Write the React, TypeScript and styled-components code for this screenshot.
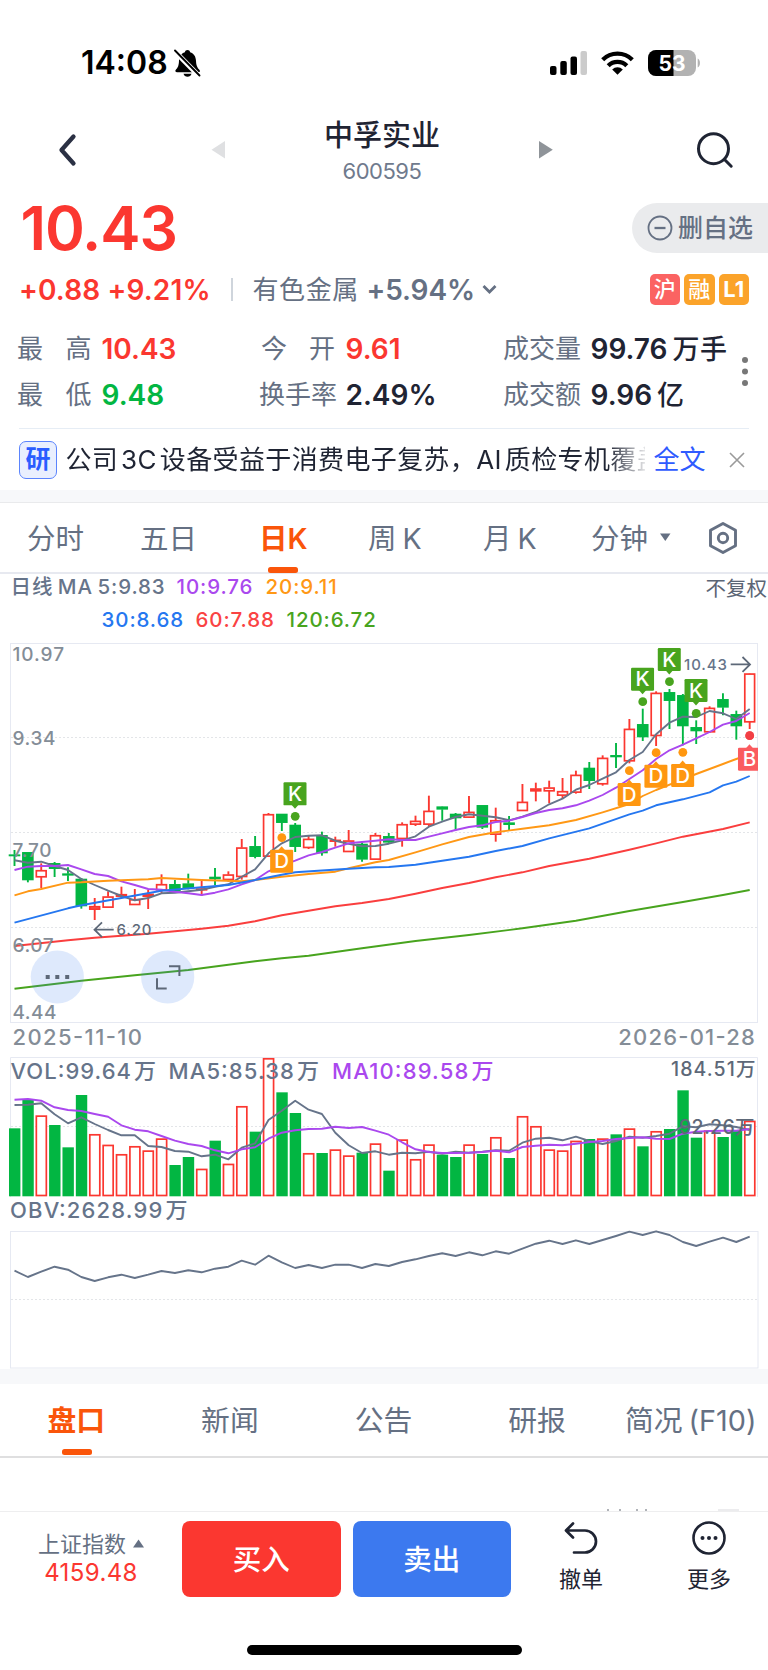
import React from "react";
import styled, { createGlobalStyle } from "styled-components";

const UI = `Inter, "Noto Sans CJK SC", sans-serif`;
const RED = "#fb3730";
const GREEN = "#02b642";
const SLATE = "#657083";
const INK = "#1f2433";
const ORANGE = "#fa550a";

const Global = createGlobalStyle`
  * { box-sizing: border-box; }
  body { margin: 0; background: #fff; font-family: ${UI}; color: ${INK}; }
  svg { display: block; flex: none; overflow: visible; }
`;

const Page = styled.main`
  width: 768px;
  height: 1670px;
  display: flex;
  flex-direction: column;
  overflow: hidden;
`;

/* status bar */
const StatusBar = styled.div`
  height: 100px;
  padding: 25px 67px 0 81px;
  display: flex;
  align-items: center;
`;
const Clock = styled.span`
  width: 93px;
  font-size: 32px;
  font-weight: 600;
  letter-spacing: 0;
  color: #000;
`;
const StatusIcons = styled.div`
  margin-left: auto;
  display: flex;
  align-items: center;
  gap: 14px;
`;

/* title bar */
const TitleBar = styled.header`
  height: 100px;
  padding: 0 35px 0 58px;
  display: grid;
  grid-template-columns: 153px 14px 1fr 14px 144px 36px;
  align-items: center;
`;
const TitleBlock = styled.div`
  display: flex;
  flex-direction: column;
  align-items: center;
  padding-top: 3px;
`;
const StockName = styled.h1`
  margin: 0;
  font-size: 29px;
  line-height: 39px;
  font-weight: 500;
`;
const StockCode = styled.span`
  font-size: 22px;
  line-height: 32px;
  color: #6f7a8d;
  letter-spacing: -0.5px;
`;

/* quote */
const PriceRow = styled.div`
  height: 58px;
  display: flex;
  justify-content: space-between;
  align-items: flex-start;
  padding-left: 20.5px;
`;
const Price = styled.span`
  font-size: 60.5px;
  line-height: 57px;
  font-weight: 600;
  color: ${RED};
  letter-spacing: -1.1px;
`;
const RemoveButton = styled.button`
  width: 136px;
  height: 50px;
  margin-top: 3px;
  padding: 0 0 0 15px;
  border: 0;
  border-radius: 25px 0 0 25px;
  background: #eaebed;
  display: flex;
  align-items: center;
  gap: 5px;
  font: 500 25px/50px ${UI};
  color: ${SLATE};
`;
const ChangeRow = styled.div`
  height: 63px;
  padding: 0 19px;
  display: flex;
  align-items: center;
`;
const Change = styled.span<{ $w: number; $c: string; $ls?: number }>`
  width: ${(p) => p.$w}px;
  white-space: nowrap;
  font-size: 28px;
  font-weight: 600;
  color: ${(p) => p.$c};
  letter-spacing: ${(p) => p.$ls ?? -0.1}px;
`;
const Divider = styled.i`
  width: 1.5px;
  height: 23px;
  margin-right: 20px;
  background: #cfd5dc;
`;
const Sector = styled.span`
  width: 114px;
  font-size: 26px;
  line-height: 36px;
  letter-spacing: 0.6px;
  color: ${SLATE};
`;
const Badges = styled.div`
  margin-left: auto;
  display: flex;
  gap: 4px;
`;
const Badge = styled.span<{ $bg: string; $bold?: boolean }>`
  width: 30.5px;
  height: 31px;
  border-radius: 5px;
  background: ${(p) => p.$bg};
  color: #fff;
  font-size: 22px;
  line-height: 31px;
  font-weight: ${(p) => (p.$bold ? 700 : 500)};
  text-align: center;
`;
const StatsWrap = styled.div`
  height: 107px;
  display: flex;
  padding: 5px 0 0 17px;
`;
const Stats = styled.div`
  width: 722px;
  display: grid;
  grid-template-columns: 242px 244px 1fr;
  grid-template-rows: 46px 46px;
  align-items: center;
`;
const Stat = styled.div`
  display: flex;
  align-items: center;
`;
const StatLabel = styled.span<{ $pad?: number; $w?: number }>`
  width: ${(p) => p.$w ?? 78}px;
  margin-left: ${(p) => p.$pad ?? 0}px;
  margin-right: ${(p) => 86.5 - (p.$w ?? 78) - (p.$pad ?? 0)}px;
  display: flex;
  justify-content: space-between;
  font-size: 26px;
  line-height: 46px;
  color: ${SLATE};
`;
const StatValue = styled.span<{ $c?: string; $x?: number }>`
  margin-left: ${(p) => p.$x ?? 0}px;
  white-space: nowrap;
  font-size: 28px;
  line-height: 46px;
  font-weight: 600;
  letter-spacing: 0;
  color: ${(p) => p.$c ?? INK};
  small { font-size: 27px; font-weight: 500; margin-left: 5px; letter-spacing: 0.6px; }
`;
const Research = styled.div`
  height: 62px;
  margin: 0 19px;
  border-top: 1.5px solid #e6edf5;
  display: flex;
  align-items: center;
`;
const ResearchTag = styled.span`
  width: 38px;
  height: 38px;
  margin-right: 8.5px;
  flex: none;
  border: 1.5px solid #5b84fd;
  border-radius: 7px;
  background: #e9effe;
  color: #2a5cff;
  font-size: 25px;
  line-height: 34px;
  font-weight: 700;
  text-align: center;
`;
const ResearchText = styled.span`
  width: 579px;
  overflow: hidden;
  white-space: nowrap;
  font-size: 26px;
  line-height: 40px;
  letter-spacing: 0.37px;
  word-spacing: -4.8px;
  mask-image: linear-gradient(90deg, #000 542px, transparent 584px);
`;
const ResearchLink = styled.a`
  margin: 0 23.5px 0 9px;
  font-size: 26px;
  line-height: 40px;
  color: #2f5bff;
`;
const Gap = styled.div<{ $h: number }>`
  height: ${(p) => p.$h}px;
  background: #f7f8fa;
`;

/* period tabs */
const Periods = styled.nav`
  height: 72px;
  border-top: 1.5px solid #e9eaec;
  border-bottom: 2px solid #e7e9f0;
  padding-left: 27px;
  display: flex;
`;
const Period = styled.span<{ $w: number; $on?: boolean }>`
  width: ${(p) => p.$w}px;
  height: 70px;
  position: relative;
  white-space: nowrap;
  font-size: 28.5px;
  line-height: 71px;
  word-spacing: -2px;
  font-weight: ${(p) => (p.$on ? 600 : 400)};
  color: ${(p) => (p.$on ? ORANGE : SLATE)};
`;
const Underline = styled.i<{ $x: number; $y: number }>`
  position: absolute;
  left: ${(p) => p.$x}px;
  top: ${(p) => p.$y}px;
  width: 30px;
  height: 6px;
  border-radius: 2.5px;
  background: ${ORANGE};
`;
const PeriodIcon = styled.span<{ $w: number }>`
  width: ${(p) => p.$w}px;
  display: flex;
  align-items: center;
`;

/* moving average legend */
const Legend = styled.div`
  height: 66px;
  padding-left: 10.5px;
  display: grid;
  grid-template-rows: 26px 40px;
`;
const LegendRow = styled.div<{ $indent?: number }>`
  display: flex;
  align-items: center;
  padding-left: ${(p) => p.$indent ?? 0}px;
  font-size: 20.5px;
  line-height: 24px;
  font-weight: 540;
  white-space: nowrap;
`;
const LegendItem = styled.span<{ $c: string; $w: number }>`
  width: ${(p) => p.$w}px;
  color: ${(p) => p.$c};
  letter-spacing: 0.9px;
  word-spacing: -1.8px;
`;
const Adjust = styled.span`
  margin-left: auto;
  margin-right: 1px;
  font-size: 20.5px;
  font-weight: 400;
  padding-top: 3px;
  color: #5b6575;
`;

/* info tabs */
const InfoTabs = styled.nav`
  height: 74px;
  border-bottom: 2px solid #dfdfe0;
  display: grid;
  grid-template-columns: repeat(5, 1fr);
`;
const InfoTab = styled.span<{ $on?: boolean }>`
  position: relative;
  text-align: center;
  white-space: nowrap;
  font-size: 28.8px;
  line-height: 74px;
  word-spacing: -2px;
  padding-right: 1px;
  font-weight: ${(p) => (p.$on ? 700 : 400)};
  color: ${(p) => (p.$on ? ORANGE : SLATE)};
`;
const Peek = styled.div`
  height: 53px;
  display: flex;
  align-items: flex-end;
  padding-left: 606px;
`;

/* bottom bar */
const BottomBar = styled.footer`
  height: 133.5px;
  border-top: 1.5px solid #eeeeef;
  padding: 8.5px 0 0 20px;
  display: flex;
  > * { flex: none; }
`;
const IndexBlock = styled.div`
  width: 142px;
  margin-right: 20px;
  padding-top: 8px;
  display: flex;
  flex-direction: column;
  align-items: center;
`;
const IndexName = styled.span`
  display: flex;
  align-items: center;
  gap: 7px;
  font-size: 22px;
  line-height: 30px;
  color: ${SLATE};
`;
const IndexValue = styled.span`
  font-size: 24px;
  line-height: 28px;
  color: ${RED};
  letter-spacing: 0.4px;
`;
const TradeButton = styled.button<{ $bg: string }>`
  width: 158.5px;
  height: 76px;
  margin-right: 12px;
  border: 0;
  border-radius: 8px;
  background: ${(p) => p.$bg};
  color: #fff;
  font: 500 28.5px/78px ${UI};
  padding: 0;
`;
const Actions = styled.div`
  display: flex;
  gap: 10px;
  margin-left: -1px;
`;
const Action = styled.div`
  width: 118px;
  display: flex;
  flex-direction: column;
  align-items: center;
  font-size: 22px;
  line-height: 30px;
  color: ${INK};
  gap: 9px;
`;
const HomeBar = styled.div`
  width: 275px;
  height: 10px;
  margin: 0 auto;
  border-radius: 5px;
  background: #000;
`;

/* ---------- chart data (vertical values are thirds of a pixel) ---------- */
const X0 = 14.5;
const STEP = 13.367;
const cx = (i: number) => X0 + STEP * i;
const py = (v: number) => v / 3;

type Candle = [number, number, number, number, number];
// [up, high, bodyTop, bodyBottom, low]
const candles: Candle[] = [
  [0, 630, 644, 648, 678], [0, 637, 637, 720, 727], [1, 670, 691, 711, 744], [0, 666, 670, 686, 711],
  [0, 682, 701, 706, 723], [0, 714, 717, 798, 806], [1, 774, 799, 808, 840], [1, 754, 770, 802, 802],
  [1, 740, 763, 769, 774], [1, 747, 778, 794, 794], [1, 750, 762, 769, 807], [1, 703, 733, 750, 760],
  [0, 720, 733, 753, 758], [0, 701, 731, 745, 748], [1, 722, 746, 750, 768], [0, 684, 711, 717, 735],
  [1, 694, 704, 719, 725], [1, 597, 623, 710, 719], [0, 588, 619, 650, 655], [1, 519, 523, 649, 649],
  [0, 522, 522, 548, 573], [0, 549, 555, 620, 636], [1, 586, 597, 623, 627], [0, 575, 586, 639, 647],
  [1, 590, 600, 604, 620], [1, 570, 602, 635, 635], [0, 604, 612, 658, 665], [1, 579, 586, 658, 660],
  [0, 579, 589, 607, 612], [1, 547, 553, 596, 620], [1, 527, 543, 553, 558], [1, 467, 513, 553, 560],
  [0, 499, 500, 508, 542], [0, 519, 522, 534, 571], [1, 468, 516, 532, 534], [0, 496, 496, 562, 567],
  [1, 503, 541, 583, 605], [0, 528, 548, 554, 570], [1, 432, 486, 512, 512], [1, 428, 446, 453, 484],
  [1, 422, 443, 453, 490], [1, 414, 454, 466, 474], [1, 392, 405, 457, 461], [0, 366, 384, 422, 447],
  [1, 346, 354, 432, 437], [0, 309, 346, 351, 384], [1, 237, 267, 363, 370], [0, 206, 253, 291, 303],
  [1, 154, 159, 287, 318], [0, 147, 157, 182, 267], [0, 162, 166, 258, 316], [0, 241, 262, 273, 312],
  [1, 199, 204, 276, 279], [0, 160, 178, 202, 226], [0, 212, 223, 258, 299], [1, 100, 101, 246, 267],
];

const seq = (a: number[]): number[][] => a.map((v, i) => [i, v]);
const averages: { color: string; pts: number[][] }[] = [
  { color: "#fa3e3e", pts: [[0, 918], [4, 901], [6, 893], [10, 881], [14, 866], [16, 857], [18, 844], [20, 826], [22, 812], [24, 799], [26, 789], [28, 777], [30, 761], [32, 744], [34, 729], [36, 712], [38, 697], [40, 678], [43, 656], [46, 629], [48, 610], [50, 590], [53, 567], [55, 547]] },
  { color: "#48a41e", pts: [[0, 1046], [5, 1022], [9, 1006], [13, 990], [18, 964], [20, 955], [22, 947], [26, 925], [30, 903], [34, 885], [38, 865], [42, 842], [46, 813], [50, 786], [53, 765], [55, 750]] },
  { color: "#66748a", pts: seq([661, 668, 665, 678, 690, 717, 735, 752, 768, 781, 774, 760, 758, 754, 749, 740, 733, 710, 688, 640, 610, 591, 587, 586, 602, 611, 619, 618, 611, 601, 589, 560, 545, 531, 523, 527, 532, 541, 530, 516, 493, 476, 449, 435, 416, 397, 360, 336, 283, 248, 230, 231, 213, 220, 237, 207]) },
  { color: "#aa48ee", pts: seq([690, 680, 678, 678, 675, 688, 702, 708, 724, 735, 747, 749, 755, 760, 765, 758, 748, 733, 720, 694, 676, 662, 646, 636, 623, 610, 606, 602, 598, 600, 600, 590, 580, 570, 561, 556, 546, 542, 531, 519, 510, 505, 496, 482, 465, 443, 417, 391, 357, 331, 314, 295, 276, 254, 243, 219]) },
  { color: "#ff9815", pts: [[0, 766], [1, 754], [2, 747], [4, 728], [5, 727], [7, 722], [10, 718], [11, 714], [14, 720], [17, 724], [18, 720], [20, 710], [22, 702], [24, 695], [25, 685], [27, 667], [28, 660], [30, 637], [32, 613], [34, 591], [36, 577], [38, 566], [40, 556], [42, 540], [44, 517], [46, 492], [47, 468], [48, 450], [50, 418], [51, 402], [53, 372], [54, 357], [55, 343]] },
  { color: "#2577f0", pts: [[0, 848], [4, 805], [5, 796], [8, 774], [11, 752], [14, 742], [16, 735], [18, 720], [20, 704], [21, 697], [25, 686], [27, 682], [28, 681], [30, 674], [32, 662], [34, 650], [36, 633], [38, 618], [40, 595], [43, 565], [46, 523], [47, 512], [48, 496], [50, 478], [52, 457], [53, 436], [54, 425], [55, 408]] },
];

const volumes = [265, 178, 226, 255, 322, 165, 282, 314, 342, 318, 331, 295, 375, 351, 386, 302, 371, 198, 275, 54, 157, 219, 339, 339, 328, 346, 338, 310, 392, 298, 357, 313, 344, 351, 313, 342, 291, 354, 228, 258, 328, 331, 302, 297, 295, 283, 265, 319, 273, 267, 151, 293, 271, 291, 272, 242];
const risingBars = new Set([2, 6, 7, 8, 9, 10, 11, 14, 16, 17, 19, 22, 24, 25, 27, 29, 30, 31, 34, 36, 38, 39, 40, 41, 42, 44, 46, 48, 52, 55]);
const volMa5 = [195, 194, 190, 223, 250, 232, 252, 270, 286, 286, 318, 321, 333, 335, 349, 344, 358, 323, 310, 240, 212, 182, 209, 222, 278, 316, 339, 334, 344, 338, 340, 335, 341, 335, 338, 335, 331, 332, 308, 296, 293, 301, 290, 303, 312, 303, 290, 293, 288, 281, 259, 262, 253, 256, 261, 270];
const volMa10 = [179, 177, 182, 202, 210, 213, 222, 230, 256, 269, 274, 288, 302, 312, 318, 331, 340, 328, 322, 296, 278, 271, 267, 266, 260, 264, 261, 272, 284, 307, 328, 336, 339, 339, 338, 336, 332, 337, 321, 317, 314, 316, 311, 306, 303, 297, 294, 292, 296, 297, 281, 275, 273, 272, 272, 267];
const obv = [212, 231, 215, 200, 209, 231, 243, 232, 224, 234, 224, 213, 219, 211, 217, 206, 200, 182, 194, 167, 187, 204, 195, 204, 194, 194, 204, 192, 198, 186, 178, 168, 160, 168, 157, 166, 154, 161, 146, 131, 122, 132, 121, 132, 120, 108, 95, 105, 94, 105, 126, 138, 125, 113, 126, 110];

const poly = (pts: number[][]) => pts.map(([i, v]) => `${cx(i).toFixed(1)},${py(v).toFixed(1)}`).join(" ");

const Line = ({ pts, color }: { pts: number[][]; color: string }) => (
  <polyline points={poly(pts)} fill="none" stroke={color} strokeWidth="1.9" strokeLinejoin="round" />
);

const Grid = ({ y }: { y: number }) => (
  <line x1="11" x2="757" y1={y} y2={y} stroke="#e3e5e8" strokeWidth="1" strokeDasharray="2 2" />
);

interface LabelProps { x: number; y: number; w: number; s: number; c?: string; b?: number; children: string }
const Label = ({ x, y, w, s, c = "#848d97", b = 550, children }: LabelProps) => (
  <text x={x} y={y} fontSize={s} fontWeight={b} fill={c} textLength={w} wordSpacing="-5" fontFamily={UI}>{children}</text>
);

interface FlagProps { i: number; top: number; dot: number; letter: string; color: string; down?: boolean }
const Flag = ({ i, top, dot, letter, color, down }: FlagProps) => {
  const x = cx(i) - 0.2;
  const y = py(top);
  const tip = down ? `M${x - 4} ${y + 22} l4 4.5 l4 -4.5z` : `M${x - 4} ${y + 1} l4 -4.5 l4 4.5z`;
  return (
    <g>
      <circle cx={x + 0.2} cy={py(dot)} r="4.4" fill={color} />
      <rect x={x - 11.5} y={y} width="23" height="23" rx="1.2" fill={color} />
      <path d={tip} fill={color} />
      <text x={x} y={y + 18.6} textAnchor="middle" fontSize="20.5" fontWeight="500" fill="#fff" fontFamily={UI}>{letter}</text>
    </g>
  );
};

const PriceChart = () => (
  <svg width="768" height="411" viewBox="0 0 768 411">
    <defs><clipPath id="frame"><rect x="0" y="0" width="758" height="411" /></clipPath></defs>
    <rect x="10.5" y="3.5" width="747" height="379" fill="none" stroke="#e6e9f2" />
    <Grid y={97.5} /><Grid y={192.5} /><Grid y={287.5} />
    {candles.map(([up, hi, top, bot, lo], i) => {
      const x = cx(i);
      const c = up ? RED : GREEN;
      const t = py(top), h = py(bot) - t;
      const thin = h < 3.2;
      return (
        <g key={i}>
          <line x1={x} x2={x} y1={py(hi)} y2={t} stroke={c} strokeWidth="1.9" />
          <line x1={x} x2={x} y1={t + h} y2={py(lo)} stroke={c} strokeWidth="1.9" />
          {up
            ? <rect x={x - 4.9} y={t + 0.4} width="9.8" height={Math.max(h - 0.6, 0.6)} fill={thin ? c : "#fff"} fillOpacity={thin ? 0.8 : 1} stroke={c} strokeWidth="1.7" />
            : <rect x={x - 5.8} y={t - 0.3} width="11.6" height={h + 0.6} fill={c} />}
        </g>
      );
    })}
    {averages.map((a) => <Line key={a.color} pts={a.pts} color={a.color} />)}
    <Label x={12.5} y={21.3} w={51.5} s={19}>10.97</Label>
    <Label x={12.5} y={105} w={43} s={19}>9.34</Label>
    <Label x={12.5} y={217} w={39} s={19}>7.70</Label>
    <Label x={12.5} y={312} w={41} s={19}>6.07</Label>
    <Label x={12.5} y={378.6} w={44} s={19}>4.44</Label>
    <g fill="none" stroke="#5d6878" strokeWidth="1.8">
      <path d="M113.7 289.7H94.5M102 282.3l-7.5 7.4l7.5 7.4" />
      <path d="M730.7 24.4H750M742.5 17l7.5 7.4l-7.5 7.4" />
    </g>
    <Label x={116.5} y={295} w={35} s={15} c="#5d6878">6.20</Label>
    <Label x={684} y={30} w={43} s={15} c="#66748a">10.43</Label>
    <g clipPath="url(#frame)">
      <Flag i={21} top={427} dot={529} letter="K" color="#48a41e" down />
      <Flag i={47} top={83} dot={185} letter="K" color="#48a41e" down />
      <Flag i={49} top={24} dot={125} letter="K" color="#48a41e" down />
      <Flag i={51} top={117} dot={220} letter="K" color="#48a41e" down />
      <Flag i={20} top={629} dot={593} letter="D" color="#ff9710" />
      <Flag i={46} top={429} dot={392} letter="D" color="#ff9710" />
      <Flag i={48} top={374} dot={338} letter="D" color="#ff9710" />
      <Flag i={50} top={372} dot={337} letter="D" color="#ff9710" />
      <Flag i={55} top={323} dot={287} letter="B" color="#fa5b5f" />
      <circle cx={cx(55)} cy={py(287)} r="4.4" fill="#f23f45" />
    </g>
    <circle cx="57.3" cy="337" r="26.6" fill="#3d7df0" fillOpacity=".17" />
    <circle cx="167.7" cy="337" r="26.6" fill="#3d7df0" fillOpacity=".17" />
    <path d="M45.7 335h4v4h-4zM55.3 335h4v4h-4zM65.2 335h4v4h-4z" fill="#5d6878" />
    <path d="M169 326.300h10.400v9.700M157 338.300v10.200h9.700" fill="none" stroke="#5d6878" strokeWidth="2" />
    <Label x={12.5} y={405} w={129.5} s={22}>2025-11-10</Label>
    <Label x={618.3} y={405} w={136.5} s={22}>2026-01-28</Label>
  </svg>
);

const VolumeChart = () => (
  <svg width="768" height="149" viewBox="0 11 768 149">
    <path d="M10.5 157V17.5H757.5V157" fill="none" stroke="#e6e9f2" />
    <Grid y={86.5} />
    {volumes.map((v, i) => {
      const x = cx(i);
      const t = py(v);
      return risingBars.has(i)
        ? <rect key={i} x={x - 4.9} y={t + 0.8} width="10" height={154.7 - t} fill="#fff" stroke={RED} strokeWidth="1.7" />
        : <rect key={i} x={x - 5.5} y={t} width="11.4" height={156.3 - t} fill={GREEN} />;
    })}
    <Line pts={seq(volMa5)} color="#66748a" />
    <Line pts={seq(volMa10)} color="#aa48ee" />
    <Label x={10.5} y={39.3} w={145.5} s={22} c="#66748a">VOL:99.64 万</Label>
    <Label x={168.5} y={39.3} w={150.5} s={22} c="#66748a">MA5:85.38 万</Label>
    <Label x={332} y={39.3} w={161.5} s={22} c="#aa48ee">MA10:89.58 万</Label>
    <Label x={671} y={36} w={84.5} s={19.5} c="#5d6878" b={500}>184.51万</Label>
    <Label x={679} y={93.7} w={75.5} s={19.5} c="#5d6878">92.26万</Label>
  </svg>
);

const ObvChart = () => (
  <svg width="768" height="169" viewBox="0 0 768 169">
    <rect x="10.5" y="31.5" width="747.5" height="136.5" fill="none" stroke="#e6e9f2" />
    <Grid y={99.5} />
    <Line pts={seq(obv)} color="#66748a" />
    <Label x={10} y={18} w={177.5} s={22} c="#66748a">OBV:2628.99 万</Label>
  </svg>
);

/* ---------- icons ---------- */
const MutedBell = () => (
  <svg width="27" height="30" viewBox="0 0 27 30">
    <path d="M13.5 2c1.5 0 2.3.8 2.6 2.2c3.9 1.2 5.7 4.4 5.9 8.6c.2 5 1.4 7 3.3 8.9c1.3 1.3.7 2.5-1 2.5H3.2c-1.9 0-2.5-1.3-1.2-2.6C4 19.500 4.800 17.500 5 12.800c.2-4.200 2-7.400 5.900-8.600C11.200 2.800 12 2 13.500 2z" fill="#000" />
    <path d="M9.5 25.800h8c-.5 1.800-2 2.900-4 2.900s-3.500-1.100-4-2.900z" fill="#000" />
    <path d="M0 2.500L26 29" stroke="#fff" strokeWidth="5" />
    <path d="M1 2.500L25.500 27.500" stroke="#000" strokeWidth="1.900" strokeLinecap="round" />
  </svg>
);
const Signal = () => (
  <svg width="37" height="24" viewBox="0 0 37 24">
    <rect x="0" y="15" width="6.5" height="9" rx="2" />
    <rect x="10.3" y="10" width="6.5" height="14" rx="2" />
    <rect x="20.5" y="5.5" width="6.5" height="18.5" rx="2" />
    <rect x="30.5" y="0" width="6.5" height="24" rx="2" fill="#cbcbcb" />
  </svg>
);
const Wifi = () => (
  <svg width="33" height="24" viewBox="0 0 33 24">
    <g fill="none" stroke="#000" strokeWidth="4.300">
      <path d="M1.700 8.700a21 21 0 0 1 29.600 0" />
      <path d="M7.200 14.700a13.200 13.200 0 0 1 18.600 0" />
    </g>
    <path d="M16.500 23.800l-5.300-5.400a7.600 7.600 0 0 1 10.600 0z" />
  </svg>
);
const Battery = () => (
  <svg width="53" height="28" viewBox="0 0 53 28">
    <defs><clipPath id="cell"><rect x="0" y="1" width="48" height="26" rx="8" /></clipPath></defs>
    <g clipPath="url(#cell)"><rect width="48" height="28" fill="#b2b2b2" /><rect width="25.5" height="28" /></g>
    <path d="M49.700 9.500c3 1.200 3 7.800 0 9z" fill="#b2b2b2" />
    <text x="24" y="21.500" textAnchor="middle" fontSize="21" fontWeight="700" fill="#fff" fontFamily={UI}>53</text>
  </svg>
);

export default function App() {
  return (
    <>
      <Global />
      <Page>
        <StatusBar>
          <Clock>14:08</Clock>
          <MutedBell />
          <StatusIcons><Signal /><Wifi /><Battery /></StatusIcons>
        </StatusBar>

        <TitleBar>
          <svg width="19" height="32" viewBox="0 0 19 32"><path d="M15.500 2.500L3.500 16l12 13.500" fill="none" stroke="#2b3144" strokeWidth="4.300" strokeLinecap="round" strokeLinejoin="round" /></svg>
          <svg width="14" height="18" viewBox="0 0 14 18"><path d="M14 0v17.500L.5 8.800z" fill="#dfe0e2" /></svg>
          <TitleBlock>
            <StockName>中孚实业</StockName>
            <StockCode>600595</StockCode>
          </TitleBlock>
          <svg width="14" height="18" viewBox="0 0 14 18"><path d="M0 0v17.500L13.800 8.800z" fill="#8f9499" /></svg>
          <span />
          <svg width="36" height="36" viewBox="0 0 36 36"><g fill="none" stroke={INK} strokeWidth="3"><circle cx="16.500" cy="16.700" r="15" /><path d="M27.500 27.500l6.700 6.700" strokeLinecap="round" /></g></svg>
        </TitleBar>

        <PriceRow>
          <Price>10.43</Price>
          <RemoveButton>
            <svg width="26" height="26" viewBox="0 0 26 26"><g fill="none" stroke={SLATE} strokeWidth="1.800"><circle cx="13" cy="13" r="11.500" /><path d="M7.500 13h11" strokeWidth="2.300" /></g></svg>
            删自选
          </RemoveButton>
        </PriceRow>
        <ChangeRow>
          <Change $w={212} $c={RED} $ls={0.15}>+0.88 +9.21%</Change>
          <Divider />
          <Sector>有色金属</Sector>
          <Change $w={115} $c={SLATE}>+5.94%</Change>
          <svg width="16" height="11" viewBox="0 0 16 11"><path d="M1.500 2l6 6l6-6" fill="none" stroke={SLATE} strokeWidth="2.800" /></svg>
          <Badges>
            <Badge $bg="#fb6362">沪</Badge>
            <Badge $bg="#fba32a">融</Badge>
            <Badge $bg="#fba32a" $bold>L1</Badge>
          </Badges>
        </ChangeRow>
        <StatsWrap>
          <Stats>
            <Stat><StatLabel $w={74.5}><span>最</span><span>高</span></StatLabel><StatValue $c={RED} $x={-2}>10.43</StatValue></Stat>
            <Stat><StatLabel $pad={2} $w={74}><span>今</span><span>开</span></StatLabel><StatValue $c={RED}>9.61</StatValue></Stat>
            <Stat><StatLabel><span>成</span><span>交</span><span>量</span></StatLabel><StatValue $x={1}>99.76<small>万手</small></StatValue></Stat>
            <Stat><StatLabel $w={74.5}><span>最</span><span>低</span></StatLabel><StatValue $c={GREEN} $x={-2}>9.48</StatValue></Stat>
            <Stat><StatLabel><span>换</span><span>手</span><span>率</span></StatLabel><StatValue>2.49%</StatValue></Stat>
            <Stat><StatLabel><span>成</span><span>交</span><span>额</span></StatLabel><StatValue $x={1}>9.96<small>亿</small></StatValue></Stat>
          </Stats>
          <svg width="12" height="92" viewBox="0 0 12 92"><g fill="#777"><circle cx="6" cy="34" r="3" /><circle cx="6" cy="45.500" r="3" /><circle cx="6" cy="57" r="3" /></g></svg>
        </StatsWrap>
        <Research>
          <ResearchTag>研</ResearchTag>
          <ResearchText>公司 3C 设备受益于消费电子复苏，AI 质检专机覆盖</ResearchText>
          <ResearchLink>全文</ResearchLink>
          <svg width="16" height="16" viewBox="0 0 16 16"><path d="M1 1l14 14M15 1L1 15" stroke="#9a9a9a" strokeWidth="1.600" /></svg>
        </Research>
        <Gap $h={12} />

        <Periods>
          <Period $w={113}>分时</Period>
          <Period $w={119}>五日</Period>
          <Period $w={109} $on>日K<Underline $x={9} $y={64} /></Period>
          <Period $w={115}>周 K</Period>
          <Period $w={108}>月 K</Period>
          <Period $w={69}>分钟</Period>
          <PeriodIcon $w={47.5}><svg width="11" height="9" viewBox="0 0 11 9"><path d="M0 .5h10.500L5.300 8z" fill={SLATE} /></svg></PeriodIcon>
          <PeriodIcon $w={30}>
            <svg width="30" height="34" viewBox="0 0 30 34"><g fill="none" stroke={SLATE} strokeWidth="2.900" strokeLinejoin="round"><path d="M15 2.500l12.500 6.800v15.400L15 31.500L2.500 24.700V9.300z" /><circle cx="15" cy="17" r="4.700" /></g></svg>
          </PeriodIcon>
        </Periods>

        <Legend>
          <LegendRow>
            <LegendItem $c="#66748a" $w={166}>日线 MA 5:9.83</LegendItem>
            <LegendItem $c="#aa48ee" $w={89}>10:9.76</LegendItem>
            <LegendItem $c="#ff9815" $w={80}>20:9.11</LegendItem>
            <Adjust>不复权</Adjust>
          </LegendRow>
          <LegendRow $indent={91}>
            <LegendItem $c="#2577f0" $w={94}>30:8.68</LegendItem>
            <LegendItem $c="#fa4343" $w={91}>60:7.88</LegendItem>
            <LegendItem $c="#48a41e" $w={92}>120:6.72</LegendItem>
          </LegendRow>
        </Legend>
        <PriceChart />
        <VolumeChart />
        <ObvChart />
        <Gap $h={15} />

        <InfoTabs>
          <InfoTab $on>盘口<Underline $x={62} $y={65} /></InfoTab>
          <InfoTab>新闻</InfoTab>
          <InfoTab>公告</InfoTab>
          <InfoTab>研报</InfoTab>
          <InfoTab>简况 (F10)</InfoTab>
        </InfoTabs>
        <Peek>
          <svg width="134" height="3" viewBox="0 0 134 3"><path d="M1 1h2v2h-2zM13 1h2v2h-2zM30 1h2v2h-2zM39 1h2v2h-2z" fill="#b0b3b8" /><rect x="112" y="1" width="21" height="2" fill="#ececee" /></svg>
        </Peek>
        <BottomBar>
          <IndexBlock>
            <IndexName>上证指数<svg width="11" height="9" viewBox="0 0 11 9"><path d="M0 8.500h11L5.500 .5z" fill={SLATE} /></svg></IndexName>
            <IndexValue>4159.48</IndexValue>
          </IndexBlock>
          <TradeButton $bg="#fb3730">买入</TradeButton>
          <TradeButton $bg="#3c79ef">卖出</TradeButton>
          <Actions>
            <Action>
              <svg width="36" height="34" viewBox="0 0 36 34"><path d="M10 2.500L3 9.500l7 7M3.500 9.500H22a11 11 0 0 1 0 22H11" fill="none" stroke={INK} strokeWidth="2.700" strokeLinecap="round" strokeLinejoin="round" /></svg>
              撤单
            </Action>
            <Action>
              <svg width="36" height="34" viewBox="0 0 36 34"><circle cx="18" cy="17" r="15.500" fill="none" stroke={INK} strokeWidth="2.600" /><g fill={INK}><circle cx="11.500" cy="17" r="2" /><circle cx="18" cy="17" r="2" /><circle cx="24.500" cy="17" r="2" /></g></svg>
              更多
            </Action>
          </Actions>
        </BottomBar>
        <HomeBar />
      </Page>
    </>
  );
}
